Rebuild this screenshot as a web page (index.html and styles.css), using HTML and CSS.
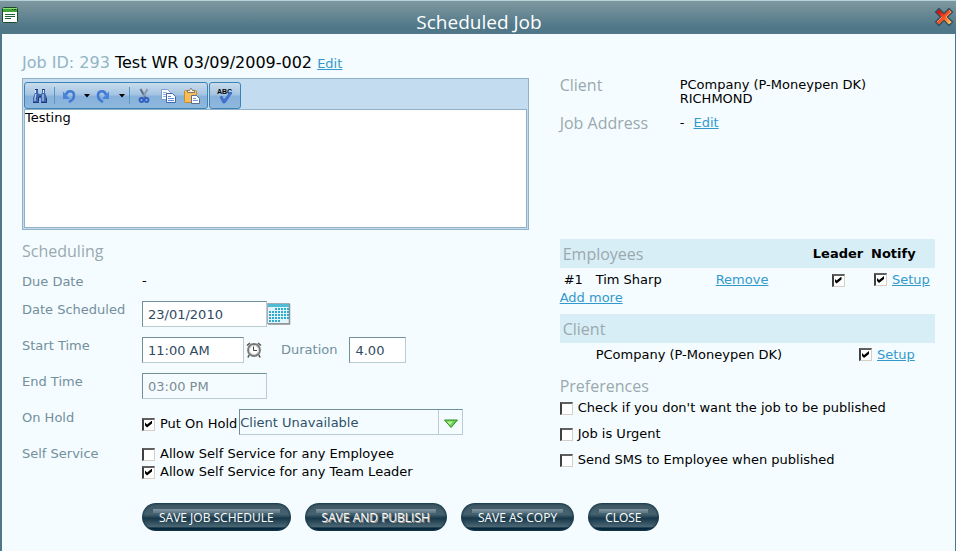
FILE: index.html
```html
<!DOCTYPE html>
<html lang="en">
<head>
    <meta charset="UTF-8">
    <meta name="viewport" content="width=device-width, initial-scale=1.0">
    <title>Scheduled Job</title>

    <link rel="stylesheet" href="styles.css">
</head>

<body>

    <header class="title-bar">
        <svg class="window-icon" width="16" height="16" viewBox="0 0 16 16">
            <rect x="0.5" y="0.5" width="15" height="15" rx="1" fill="#fff" stroke="#1d4a26"/>
            <rect x="1" y="1" width="14" height="4" fill="#3fa535"/>
            <path d="M1 1.5h14" stroke="#8fdc7c"/>
            <path d="M10 2.5h1M12 2.5h2" stroke="#15501b"/>
            <path d="M3 7.5h10M3 9.5h10M3 11.5h6" stroke="#23603a"/>
        </svg>
        <h1>Scheduled Job</h1>
        <button type="button" class="close-x" aria-label="Close window">
            <svg width="20" height="20" viewBox="0 0 20 20">
                <defs>
                    <linearGradient id="crossFill" x1="0" y1="0" x2="1" y2="1">
                        <stop offset="0.2" stop-color="#d9120f"/>
                        <stop offset="0.55" stop-color="#fb5a2c"/>
                        <stop offset="0.9" stop-color="#ffd35c"/>
                    </linearGradient>
                </defs>
                <path d="M5 1.5L10 6.5L15 1.5L18.5 5L13.5 10L18.5 15L15 18.5L10 13.5L5 18.5L1.5 15L6.5 10L1.5 5Z" fill="url(#crossFill)" stroke="#34525f" stroke-width="1.5" stroke-linejoin="round"/>
                <path d="M15 3L17 5L12 10L17 15M3 15L8 10" fill="none" stroke="#f7b05a" stroke-width="0.8"/>
            </svg>
        </button>
    </header>

    <main class="job">
        <div class="columns">

            <!-- Job details and scheduling -->
            <section>
                <div class="job-line"><span class="job-id">Job ID: 293</span> Test WR 03/09/2009-002 <a href="#">Edit</a></div>

                <div class="editor">
                    <div class="toolbar">
                        <div class="tool-group">
                            <button type="button" class="tool" aria-label="Find">
                                <svg width="16" height="16" viewBox="0 0 16 16">
                                    <path d="M3 2h3v3l1 1h2l1-1V2h3v3l2 5v4H9v-4H7v4H1v-4l2-5z" fill="#3d64ad"/>
                                    <path d="M3.5 2v3M11.5 2v3M4 6L3 10v3M11 6v7" stroke="#dce9fb" fill="none"/>
                                    <path d="M1 14.5h6M9 14.5h6M3 1.5h3M10 1.5h3M7 8.5h2M6.5 9v4M14.5 10v4" stroke="#213b78" fill="none"/>
                                </svg>
                            </button>
                            <span class="separator"></span>
                            <button type="button" class="tool" aria-label="Undo">
                                <svg width="16" height="16" viewBox="0 0 16 16">
                                    <path d="M5 7C6 2 13 2 13 7.500C13 11 10 13 8 14" fill="none" stroke="#4179d4" stroke-width="2.600"/>
                                    <path d="M2 3.500V11H9z" fill="#4a83dc"/>
                                </svg>
                            </button>
                            <button type="button" class="caret" aria-label="Undo history"><svg width="6" height="4" viewBox="0 0 6 4"><path d="M0 0h6L3 3.5z"/></svg></button>
                            <button type="button" class="tool" aria-label="Redo">
                                <svg width="16" height="16" viewBox="0 0 16 16">
                                    <path d="M10 7C9 2 2 2 2 7.500C2 11 5 13 7 14" fill="none" stroke="#4179d4" stroke-width="2.600"/>
                                    <path d="M13 3.500V11H6z" fill="#4a83dc"/>
                                </svg>
                            </button>
                            <button type="button" class="caret" aria-label="Redo history"><svg width="6" height="4" viewBox="0 0 6 4"><path d="M0 0h6L3 3.5z"/></svg></button>
                            <span class="separator"></span>
                            <button type="button" class="tool" aria-label="Cut">
                                <svg width="16" height="16" viewBox="0 0 16 16" fill="none">
                                    <path d="M4.5 1L9.5 10" stroke="#5d6b80" stroke-width="2"/>
                                    <path d="M11.5 1L6.5 10" stroke="#8b99ad" stroke-width="2"/>
                                    <circle cx="5.5" cy="12" r="2" stroke="#2f5fc0" stroke-width="1.8"/>
                                    <circle cx="10.5" cy="12" r="2" stroke="#2f5fc0" stroke-width="1.8"/>
                                </svg>
                            </button>
                            <button type="button" class="tool" aria-label="Copy">
                                <svg width="16" height="16" viewBox="0 0 16 16">
                                    <path d="M1.5 1.5h6l3 3v7h-9z" fill="#fff" stroke="#7e9fd2"/>
                                    <path d="M3 4.5h4M3 6.5h4M3 8.5h4" stroke="#91b2e3"/>
                                    <path d="M6.5 5.5h6l3 3v6h-9z" fill="#fff" stroke="#3f67b0"/>
                                    <path d="M8 8.5h3M8 10.5h6M8 12.5h6" stroke="#5f8cd6"/>
                                </svg>
                            </button>
                            <button type="button" class="tool" aria-label="Paste">
                                <svg width="16" height="16" viewBox="0 0 16 16">
                                    <rect x="0.5" y="2.5" width="12" height="12" rx="1" fill="#f7be58" stroke="#c98a2c"/>
                                    <path d="M3.5 4.5v-2h2l1-2h1l1 2h2v2z" fill="#f4f1e4" stroke="#80796a"/>
                                    <path d="M7.5 7.5h5l3 3v5h-8z" fill="#fff" stroke="#5a6f95"/>
                                    <path d="M9 10.5h3M9 12.5h5" stroke="#6a96dc"/>
                                </svg>
                            </button>
                        </div>
                        <div class="tool-group">
                            <button type="button" class="tool" aria-label="Check spelling">
                                <svg width="18" height="18" viewBox="0 0 18 18">
                                    <text class="abc" x="1" y="7">ABC</text>
                                    <path d="M4 10l2-1 2 4 6-8 2 1-7 10H7z" fill="#3f74d6" stroke="#2c57ae" stroke-width="0.5"/>
                                </svg>
                            </button>
                        </div>
                    </div>
                    <textarea class="notes" aria-label="Job description">Testing</textarea>
                </div>

                <h2 class="scheduling-heading">Scheduling</h2>
                <div class="form">
                    <span class="label">Due Date</span>
                    <div class="field due">-</div>

                    <label class="label" for="dateScheduled">Date Scheduled</label>
                    <div class="field">
                        <input type="text" class="box date" id="dateScheduled" value="23/01/2010">
                        <button type="button" class="icon-button" aria-label="Pick a date">
                            <svg width="24" height="22" viewBox="0 0 24 22">
                                <rect x="0.5" y="0.5" width="22" height="20" fill="#e5f4fa" stroke="#a3adb2"/>
                                <path d="M22.500 1v20H1" fill="none" stroke="#8b9092" stroke-width="1.500"/>
                                <rect x="1" y="1" width="21" height="3" fill="#50bbd5"/>
                                <path d="M8 6h14M2 9h20M2 12h20M2 15h20" stroke="#2eacd0" stroke-width="2" stroke-dasharray="2 1"/>
                                <path d="M2 18h11" stroke="#2eacd0" stroke-width="2" stroke-dasharray="2 1"/>
                            </svg>
                        </button>
                    </div>

                    <label class="label" for="startTime">Start Time</label>
                    <div class="field">
                        <input type="text" class="box time" id="startTime" value="11:00 AM">
                        <button type="button" class="icon-button clock" aria-label="Pick a time">
                            <svg width="16" height="16" viewBox="0 0 16 16" fill="none">
                                <path d="M1 3.5L4 1M15 3.5L12 1M3 13l-1 2.5M13 13l1 2.5" stroke="#555" stroke-width="1.6"/>
                                <circle cx="8" cy="8" r="6" fill="#fff" stroke="#777" stroke-width="1.8"/>
                                <circle cx="8" cy="8" r="4.5" stroke="#ccc"/>
                                <path d="M7.5 4.5v4H11" stroke="#444"/>
                            </svg>
                        </button>
                        <label class="label duration-label" for="duration">Duration</label>
                        <input type="text" class="box duration" id="duration" value="4.00">
                    </div>

                    <label class="label" for="endTime">End Time</label>
                    <div class="field">
                        <input type="text" class="box date" id="endTime" value="03:00 PM" disabled>
                    </div>

                    <span class="label">On Hold</span>
                    <div class="field">
                        <label class="check hold"><input type="checkbox" checked>Put On Hold</label>
                        <div class="drop-down">
                            <select aria-label="Hold reason">
                                <option>Client Unavailable</option>
                            </select>
                            <span class="drop-arrow">
                                <svg width="16" height="10" viewBox="0 0 16 10">
                                    <path d="M1.5 1h13L8 8.5z" fill="#6bd04d" stroke="#2f8f2a"/>
                                    <path d="M4 2.5h6L7 6z" fill="#b9f29c"/>
                                </svg>
                            </span>
                        </div>
                    </div>

                    <span class="label">Self Service</span>
                    <div>
                        <label class="check"><input type="checkbox">Allow Self Service for any Employee</label>
                        <label class="check"><input type="checkbox" checked>Allow Self Service for any Team Leader</label>
                    </div>
                </div>
            </section>

            <!-- Client, employees and preferences -->
            <section class="side">
                <div class="client-details">
                    <h2>Client</h2>
                    <p>PCompany (P-Moneypen DK)<br>RICHMOND</p>
                    <h2>Job Address</h2>
                    <p>- <a class="address-edit" href="#">Edit</a></p>
                </div>

                <table class="people">
                    <thead>
                        <tr>
                            <th class="group" colspan="3">Employees</th>
                            <th class="leader">Leader</th>
                            <th class="notify">Notify</th>
                        </tr>
                    </thead>
                    <tbody>
                        <tr>
                            <td class="number">#1</td>
                            <td class="name">Tim Sharp</td>
                            <td><a href="#">Remove</a></td>
                            <td class="leader"><input type="checkbox" aria-label="Leader" checked></td>
                            <td class="setup"><input type="checkbox" aria-label="Notify Tim Sharp" checked><a href="#">Setup</a></td>
                        </tr>
                    </tbody>
                </table>
                <a class="add-more" href="#">Add more</a>

                <table class="people">
                    <thead>
                        <tr>
                            <th class="group" colspan="3">Client</th>
                        </tr>
                    </thead>
                    <tbody>
                        <tr>
                            <td class="number"></td>
                            <td>PCompany (P-Moneypen DK)</td>
                            <td class="client-setup"><input type="checkbox" aria-label="Notify client" checked><a href="#">Setup</a></td>
                        </tr>
                    </tbody>
                </table>

                <h2 class="preferences-heading">Preferences</h2>
                <div class="preferences">
                    <label class="check"><input type="checkbox">Check if you don't want the job to be published</label>
                    <label class="check"><input type="checkbox">Job is Urgent</label>
                    <label class="check"><input type="checkbox">Send SMS to Employee when published</label>
                </div>
            </section>
        </div>

        <div class="actions">
            <button type="button" class="pill">SAVE JOB SCHEDULE</button>
            <button type="button" class="pill publish">SAVE AND PUBLISH</button>
            <button type="button" class="pill">SAVE AS COPY</button>
            <button type="button" class="pill">CLOSE</button>
        </div>
    </main>

</body>
</html>
```
FILE: styles.css
```css
/* Reset */
* { margin: 0; padding: 0; box-sizing: border-box; }

/* Body */
body {
    display: flex;
    flex-direction: column;
    min-height: 100vh;
    font-family: Verdana, "DejaVu Sans", sans-serif;
    font-size: 13px;
    color: black;
    background: #f4fcff;
}

a { color: #3399cc; }

svg { display: block; }

button {
    border: 0;
    background: none;
    cursor: pointer;
}

input, select, textarea {
    font-family: inherit;
    font-size: 13px;
}

h2 {
    font-family: "Trebuchet MS", "Open Sans", sans-serif;
    font-size: 16px;
    font-weight: 500;
    line-height: 18px;
    color: #9aa9ae;
}

/* Title bar */
.title-bar {
    display: flex;
    align-items: flex-start;
    justify-content: space-between;
    height: 34px;
    padding: 6px 2px 0;
    border-top: 1px solid #b4d2d8;
    background: linear-gradient(#7f989f, #4f7788 80%);
}

.title-bar h1 {
    padding-left: 6px;
    font-family: "Open Sans", sans-serif;
    font-size: 19px;
    font-weight: 400;
    line-height: 30px;
    color: white;
}

/* Job */
.job {
    flex: 1;
    padding: 17px 20px;
    border-left: 2px solid #4f7788;
    border-right: 1px solid #4f7788;
}

.columns {
    display: grid;
    grid-template-columns: 1.35fr 1fr;
    gap: 31px;
}

.job-line {
    font-size: 16px;
    line-height: 24px;
    margin-bottom: 2px;
}

.job-line a { font-size: 13px; }

.job-id { color: #93b4c4; }

/* Editor */
.editor {
    display: flex;
    flex-direction: column;
    height: 152px;
    padding: 3px 1px 1px;
    border: 1px solid #92b1c7;
    background: #c3dcef;
}

.toolbar {
    display: flex;
    gap: 1px;
}

.tool-group {
    display: flex;
    align-items: center;
    height: 27px;
    padding: 0 3px;
    border: 1px solid #3d82b5;
    border-radius: 3px;
    background: linear-gradient(#c9dcec, #a5c5e2 45%, #86b1da 55%, #8fb8de);
}

.tool {
    display: grid;
    place-items: center;
    width: 24px;
    height: 24px;
}

.caret {
    display: grid;
    place-items: center;
    width: 11px;
    height: 24px;
}

.separator {
    width: 1px;
    height: 17px;
    margin: 0 2px;
    background: #5b97c6;
}

.abc {
    font-family: "Liberation Sans", sans-serif;
    font-size: 7px;
    font-weight: bold;
}

.notes {
    flex: 1;
    display: block;
    width: 100%;
    border: 1px solid #92b1c7;
    background: white;
    resize: none;
    line-height: 16px;
}

/* Scheduling form */
.scheduling-heading { margin: 12px 0 13px; }

.form {
    display: grid;
    grid-template-columns: 120px 1fr;
    row-gap: 10px;
}

.label {
    line-height: 18px;
    color: #738f9c;
}

.field {
    display: flex;
    height: 26px;
}

.due { height: 18px; }

.box {
    height: 26px;
    padding: 0 5px;
    border: 1px solid #b9ccd1;
    border-top-color: #6f8f99;
    border-left-color: #6f8f99;
    background: white;
    color: #2f4a63;
}

.box:disabled {
    background: #f4fcff;
    color: #7d8b92;
}

.date { width: 125px; }
.time { width: 102px; }
.duration { width: 57px; }

.icon-button { align-self: center; }

.clock { margin: 0 19px 0 2px; }

.duration-label {
    align-self: center;
    margin-right: 12px;
}

/* Check boxes */
input[type="checkbox"] {
    appearance: none;
    flex: none;
    width: 13px;
    height: 13px;
    border: 2px solid #404040;
    border-right: 1px solid #d4d0c8;
    border-bottom: 1px solid #d4d0c8;
    border-top-color: #606060;
    background: white;
    vertical-align: middle;
}

input[type="checkbox"]:checked::before {
    content: "";
    display: block;
    width: 7px;
    height: 7px;
    margin: 1px;
    background: black;
    clip-path: polygon(0 29%, 29% 58%, 100% 0, 100% 42%, 29% 100%, 0 71%);
}

.check {
    display: flex;
    align-items: center;
    gap: 5px;
    line-height: 18px;
}

.hold {
    margin-right: 2px;
    padding-top: 4px;
}

.drop-down {
    position: relative;
    width: 224px;
}

.drop-down select {
    appearance: none;
    width: 100%;
    height: 26px;
    border: 1px solid #b9ccd1;
    border-top-color: #6f8f99;
    border-left-color: #6f8f99;
    border-radius: 0;
    background: #f4fcff;
    color: #2f5068;
}

.drop-arrow {
    position: absolute;
    top: 1px;
    right: 1px;
    display: grid;
    place-items: center;
    width: 24px;
    height: 24px;
    padding-top: 4px;
    border-left: 1px solid #b9ccd1;
    pointer-events: none;
}

/* Client side */
.side { padding-top: 27px; }

.client-details {
    display: grid;
    grid-template-columns: 120px 1fr;
    align-content: start;
    row-gap: 10px;
    min-height: 161px;
    line-height: 14px;
}

.client-details h2 { line-height: 14px; }

.address-edit { margin-left: 5px; }

.people {
    width: 100%;
    border-collapse: collapse;
}

.people th {
    height: 29px;
    background: #d8eef7;
    text-align: left;
}

.people .group {
    padding-left: 3px;
    font-family: "Trebuchet MS", "Open Sans", sans-serif;
    font-size: 16px;
    font-weight: 500;
    color: #9aa9ae;
}

.people td { height: 22px; }

.people .number {
    width: 36px;
    padding-left: 4px;
}

.people .name { width: 120px; }

.people .leader {
    width: 54px;
    text-align: center;
}

.people .notify {
    width: 70px;
    padding-left: 6px;
}

.people .setup { padding-left: 9px; }

.people .client-setup { width: 76px; }

.people td a { vertical-align: middle; }

.people input { margin-right: 5px; }

.people .leader input { margin: 0; }

.add-more {
    display: block;
    width: fit-content;
    margin-bottom: 9px;
    line-height: 15px;
}

.preferences-heading { margin-top: 12px; }

.preferences .check { line-height: 26px; }

/* Buttons */
.actions {
    display: flex;
    flex-wrap: wrap;
    gap: 14px;
    margin: 22px 0 0 120px;
}

.pill {
    height: 28px;
    padding: 0 17px;
    border-radius: 14px;
    background:
        linear-gradient(#8195a0, #5c7784) center 6px / calc(100% - 22px) 4px no-repeat,
        linear-gradient(#3d5662, #46626f 40%, #17384a 55%, #4a6572 84%, #04263a 90%);
    box-shadow: inset 0 0 2px 1px #17394a;
    font-family: "Open Sans", sans-serif;
    font-size: 12px;
    color: white;
}

.publish { text-shadow: 1px 1px 0 #a9a09a; }
```
